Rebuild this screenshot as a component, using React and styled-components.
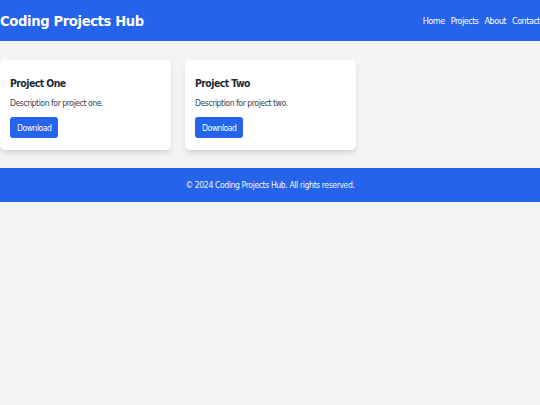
import React from "react";
import styled, { createGlobalStyle } from "styled-components";

const Global = createGlobalStyle`
  html, body { margin: 0; padding: 0; background: #f3f4f6; }
  body { font-family: "DejaVu Sans Condensed", "DejaVu Sans", sans-serif; font-stretch: condensed; color: #1f2937; }
  * { box-sizing: border-box; }
`;

const Header = styled.header`
  background: #2563eb;
  color: #fff;
  height: 41px;
  display: flex;
  align-items: center;
  justify-content: space-between;
  white-space: nowrap;
  overflow: hidden;
`;

const Title = styled.h1`
  margin: 0;
  font-size: 14.6px;
  letter-spacing: -0.35px;
  font-weight: bold;
  line-height: 20px;
`;

const Nav = styled.nav`
  display: flex;
  gap: 6px;
  margin-right: 0;
`;

const NavLink = styled.a`
  color: #fff;
  text-decoration: none;
  font-size: 9px;
  letter-spacing: -0.5px;
`;

const Main = styled.main`
  padding: 19px 0 18px;
  display: grid;
  grid-template-columns: repeat(3, 171px);
  column-gap: 14px;
`;

const Card = styled.div`
  background: #fff;
  border-radius: 5px;
  box-shadow: 0 4px 6px -1px rgba(0,0,0,0.1), 0 2px 4px -2px rgba(0,0,0,0.1);
  padding: 16px 10px 12px;
`;

const CardTitle = styled.h2`
  margin: 0 0 7px;
  font-size: 10.4px;
  letter-spacing: -0.55px;
  line-height: 14px;
  font-weight: bold;
  color: #1f2937;
`;

const CardText = styled.p`
  margin: 0 0 8px;
  font-size: 8.6px;
  letter-spacing: -0.45px;
  line-height: 12px;
  color: #374151;
`;

const Button = styled.button`
  display: block;
  background: #2563eb;
  color: #fff;
  border: none;
  border-radius: 3px;
  font-family: inherit;
  font-stretch: inherit;
  font-size: 8.6px;
  letter-spacing: -0.5px;
  height: 21px;
  padding: 0 7px;
`;

const Footer = styled.footer`
  background: #2563eb;
  color: #f3f6ff;
  height: 34px;
  display: flex;
  align-items: center;
  justify-content: center;
  font-size: 8.6px;
  letter-spacing: -0.4px;
`;

const projects = [
  { title: "Project One", desc: "Description for project one." },
  { title: "Project Two", desc: "Description for project two." },
];

export default function App() {
  return (
    <>
      <Global />
      <Header>
        <Title>Coding Projects Hub</Title>
        <Nav>
          <NavLink href="#">Home</NavLink>
          <NavLink href="#">Projects</NavLink>
          <NavLink href="#">About</NavLink>
          <NavLink href="#">Contact</NavLink>
        </Nav>
      </Header>
      <Main>
        {projects.map((p) => (
          <Card key={p.title}>
            <CardTitle>{p.title}</CardTitle>
            <CardText>{p.desc}</CardText>
            <Button>Download</Button>
          </Card>
        ))}
      </Main>
      <Footer>© 2024 Coding Projects Hub. All rights reserved.</Footer>
    </>
  );
}
